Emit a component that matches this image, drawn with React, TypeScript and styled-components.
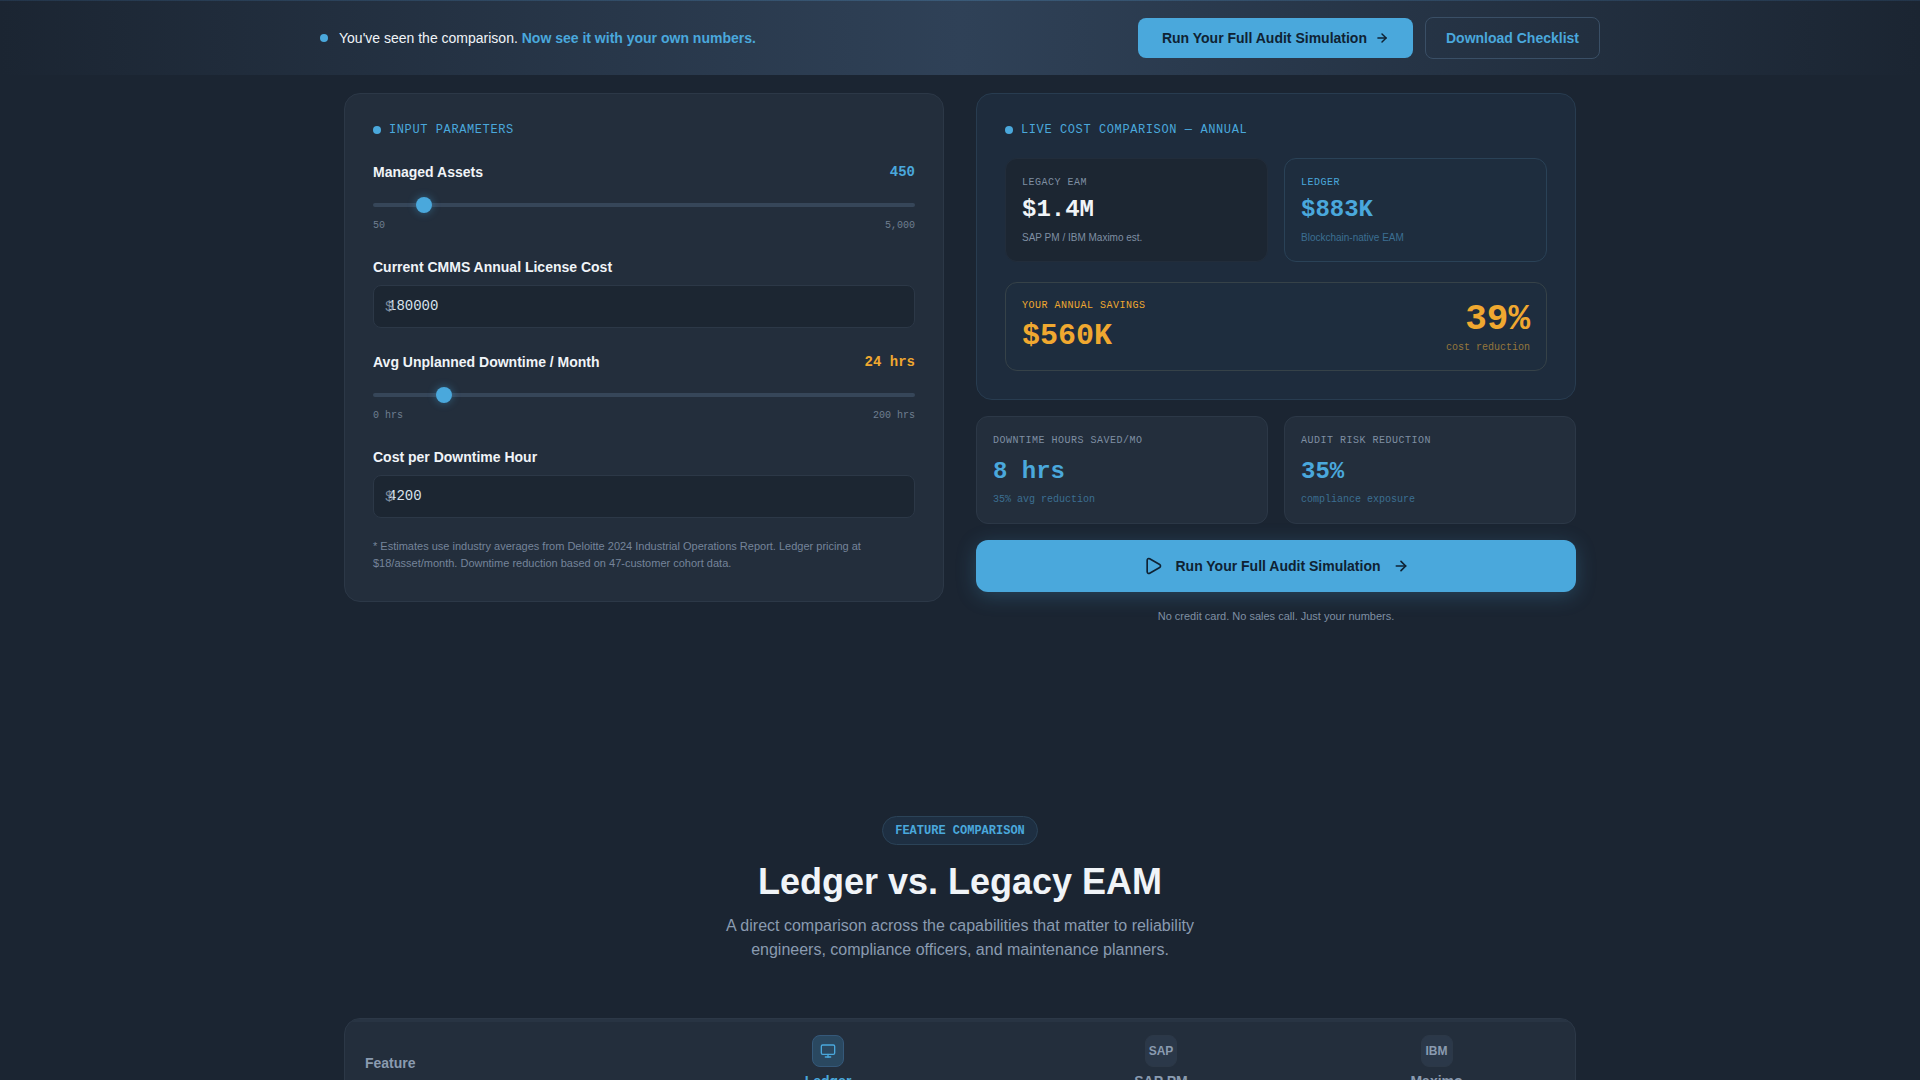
import { useState } from "react";
import styled, { createGlobalStyle } from "styled-components";
import { ArrowRight, Monitor, Play } from "lucide-react";

const GlobalStyle = createGlobalStyle`
  html, body {
    margin: 0;
    padding: 0;
    height: 1080px;
    overflow: hidden;
    background: #1b2532;
  }
  * {
    box-sizing: border-box;
  }
`;

const blue = "#4aa8dc";
const amber = "#f0a830";
const sans = `"Liberation Sans", Arial, sans-serif`;
const mono = `"Liberation Mono", "Courier New", monospace`;

const Page = styled.div`
  height: 1080px;
  overflow: hidden;
  background: #1b2532;
  font-family: ${sans};
  color: #f0f4f8;
`;

const TopBar = styled.div`
  height: 75px;
  border-top: 1px solid;
  border-image: linear-gradient(90deg, #23354a, #3a5a78 50%, #23354a) 1;
  background: linear-gradient(90deg, #1b2532 0%, #2f4157 50%, #1b2532 100%);
`;

const TopBarInner = styled.div`
  max-width: 1280px;
  height: 74px;
  margin: 0 auto;
  display: flex;
  align-items: center;
  justify-content: space-between;
`;

const TopMessage = styled.div`
  display: flex;
  align-items: center;
  gap: 11px;
  font-size: 14px;
  color: #f0f4f8;
  strong {
    color: ${blue};
    font-weight: 700;
  }
`;

const TopDot = styled.span`
  width: 8px;
  height: 8px;
  border-radius: 50%;
  background: ${blue};
`;

const TopActions = styled.div`
  display: flex;
  align-items: center;
  gap: 12px;
`;

const PrimaryButton = styled.button`
  height: 40px;
  padding: 0 24px;
  display: flex;
  align-items: center;
  gap: 8px;
  border: none;
  border-radius: 8px;
  background: ${blue};
  color: #0f2233;
  font-family: ${sans};
  font-size: 14px;
  font-weight: 700;
  cursor: pointer;
`;

const GhostButton = styled.button`
  height: 42px;
  padding: 0 20px;
  border: 1px solid #3a4f66;
  border-radius: 8px;
  background: transparent;
  color: ${blue};
  font-family: ${sans};
  font-size: 14px;
  font-weight: 700;
  cursor: pointer;
`;

const Container = styled.div`
  width: 1232px;
  margin: 0 auto;
`;

const Columns = styled.div`
  display: grid;
  grid-template-columns: 600px 600px;
  gap: 32px;
  align-items: start;
  margin-top: 18px;
  height: 531px;
`;

const Panel = styled.div<{ $live?: boolean }>`
  padding: 28px;
  border-radius: 16px;
  border: 1px solid ${(p) => (p.$live ? "#283c50" : "#2c3847")};
  background: ${(p) => (p.$live ? "#1e2c3d" : "#232e3c")};
`;

const PanelTitle = styled.div`
  display: flex;
  align-items: center;
  gap: 8px;
  height: 15px;
  font-family: ${mono};
  font-size: 12px;
  letter-spacing: 0.6px;
  color: ${blue};
  &::before {
    content: "";
    width: 8px;
    height: 8px;
    border-radius: 50%;
    background: ${blue};
  }
`;

const Fields = styled.div`
  display: flex;
  flex-direction: column;
  gap: 24px;
  margin-top: 25px;
`;

const Field = styled.div``;

const FieldHead = styled.div`
  display: flex;
  align-items: center;
  justify-content: space-between;
  height: 20px;
`;

const FieldLabel = styled.label`
  font-size: 14px;
  font-weight: 700;
  color: #f0f4f8;
`;

const FieldValue = styled.span<{ $amber?: boolean }>`
  font-family: ${mono};
  font-size: 14px;
  font-weight: 700;
  color: ${(p) => (p.$amber ? amber : blue)};
`;

const Range = styled.input`
  display: block;
  width: 100%;
  height: 16px;
  margin: 15px 0 0;
  appearance: none;
  background: transparent;
  &::-webkit-slider-runnable-track {
    height: 4px;
    border-radius: 2px;
    background: #364659;
  }
  &::-webkit-slider-thumb {
    appearance: none;
    width: 16px;
    height: 16px;
    margin-top: -6px;
    border-radius: 50%;
    background: ${blue};
    box-shadow: 0 0 8px rgba(74, 168, 220, 0.45);
  }
`;

const RangeEnds = styled.div`
  display: flex;
  justify-content: space-between;
  margin-top: 6px;
  height: 14px;
  line-height: 14px;
  font-family: ${mono};
  font-size: 10px;
  color: #6f7e90;
`;

const MoneyBox = styled.div`
  position: relative;
  margin-top: 8px;
`;

const MoneySign = styled.span`
  position: absolute;
  left: 12px;
  top: 50%;
  transform: translateY(-50%);
  font-family: ${mono};
  font-size: 14px;
  color: #7b8a9c;
`;

const MoneyInput = styled.input`
  display: block;
  width: 100%;
  height: 43px;
  padding: 0 14px 1px;
  border: 1px solid #2c3847;
  border-radius: 8px;
  background: #1c2632;
  color: #d8e2ec;
  font-family: ${mono};
  font-size: 14px;
  outline: none;
`;

const Footnote = styled.p`
  margin: 20px 0 1px;
  font-size: 11px;
  line-height: 17px;
  color: #75849a;
`;

const RightColumn = styled.div`
  display: flex;
  flex-direction: column;
  gap: 16px;
`;

const TwoUp = styled.div<{ $first?: boolean }>`
  display: grid;
  grid-template-columns: 1fr 1fr;
  gap: 16px;
  margin-top: ${(p) => (p.$first ? "21px" : "0")};
`;

const CostCard = styled.div<{ $ledger?: boolean }>`
  height: 104px;
  padding: 17px 16px 16px;
  border-radius: 12px;
  border: 1px solid ${(p) => (p.$ledger ? "#2a4257" : "#222d3b")};
  background: ${(p) => (p.$ledger ? "#1e2d3e" : "#1c2632")};
`;

const SmallCaps = styled.div<{ $color: string }>`
  height: 14px;
  line-height: 14px;
  font-family: ${mono};
  font-size: 10px;
  letter-spacing: 0.5px;
  color: ${(p) => p.$color};
`;

const CostValue = styled.div<{ $color: string }>`
  margin-top: 6px;
  height: 28px;
  line-height: 28px;
  font-family: ${mono};
  font-size: 24px;
  font-weight: 700;
  color: ${(p) => p.$color};
`;

const CostNote = styled.div<{ $color: string }>`
  margin-top: 7px;
  font-size: 10px;
  line-height: 13px;
  color: ${(p) => p.$color};
`;

const SavingsBox = styled.div`
  display: flex;
  align-items: center;
  justify-content: space-between;
  height: 89px;
  margin-top: 20px;
  padding: 0 16px;
  border-radius: 12px;
  border: 1px solid #364248;
  background: #1e2d3e;
`;

const SavingsLeft = styled.div`
  margin-top: -1px;
`;

const SavingsValue = styled.div`
  margin-top: 5px;
  line-height: 36px;
  font-family: ${mono};
  font-size: 30px;
  font-weight: 700;
  color: ${amber};
`;

const SavingsRight = styled.div`
  text-align: right;
`;

const SavingsPct = styled.div`
  line-height: 40px;
  font-family: ${mono};
  font-size: 36px;
  font-weight: 700;
  color: ${amber};
`;

const SavingsNote = styled.div`
  margin-top: 1px;
  line-height: 13px;
  font-family: ${mono};
  font-size: 10px;
  color: #96773c;
`;

const StatCard = styled.div`
  height: 108px;
  padding: 17px 16px 16px;
  border-radius: 12px;
  border: 1px solid #2c3847;
  background: #232e3c;
`;

const StatValue = styled(CostValue)`
  margin-top: 10px;
`;

const StatNote = styled.div`
  margin-top: 7px;
  line-height: 13px;
  font-family: ${mono};
  font-size: 10px;
  color: #3c6f92;
`;

const RunButton = styled.button`
  display: flex;
  align-items: center;
  justify-content: center;
  gap: 12px;
  width: 100%;
  height: 52px;
  border: none;
  border-radius: 12px;
  background: ${blue};
  color: #0f2233;
  font-family: ${sans};
  font-size: 14px;
  font-weight: 700;
  box-shadow: 0 4px 20px rgba(74, 168, 220, 0.25);
  cursor: pointer;
`;

const RunNote = styled.div`
  margin-top: 2px;
  text-align: center;
  font-size: 11px;
  line-height: 13px;
  color: #7f8fa3;
`;

const SectionHead = styled.div`
  display: flex;
  flex-direction: column;
  align-items: center;
  margin-top: 192px;
`;

const Pill = styled.div`
  height: 29px;
  padding: 0 12px;
  display: flex;
  align-items: center;
  border-radius: 15px;
  border: 1px solid #2b4358;
  background: #1e2f42;
  font-family: ${mono};
  font-size: 12px;
  font-weight: 700;
  color: ${blue};
`;

const Heading = styled.h2`
  margin: 15px 0 0;
  font-size: 36px;
  font-weight: 700;
  line-height: 44px;
  color: #f0f4f8;
`;

const SubHeading = styled.p`
  margin: 10px 0 0;
  width: 520px;
  text-align: center;
  font-size: 16px;
  line-height: 24px;
  color: #8a9bb0;
`;

const TableCard = styled.div`
  margin-top: 56px;
  height: 200px;
  border-radius: 16px;
  border: 1px solid #2c3847;
  background: #232e3c;
  overflow: hidden;
`;

const TableHead = styled.div`
  display: grid;
  grid-template-columns: 287px 392px 274px 277px;
  padding-top: 13px;
  border-top: 3px solid #283443;
`;

const FeatureCell = styled.div`
  padding: 20px 0 0 20px;
  font-size: 14px;
  font-weight: 700;
  color: #8a9bb0;
`;

const VendorCell = styled.div`
  display: flex;
  flex-direction: column;
  align-items: center;
  gap: 6px;
`;

const VendorIcon = styled.div<{ $ledger?: boolean }>`
  width: 32px;
  height: 32px;
  display: flex;
  align-items: center;
  justify-content: center;
  border-radius: 8px;
  border: 1px solid ${(p) => (p.$ledger ? "#35597a" : "#2c3847")};
  background: ${(p) => (p.$ledger ? "#2a4860" : "#2b3849")};
  color: ${(p) => (p.$ledger ? blue : "#8a9bb0")};
  font-size: 12px;
  font-weight: 700;
`;

const VendorName = styled.div<{ $ledger?: boolean }>`
  font-size: 14px;
  font-weight: 700;
  color: ${(p) => (p.$ledger ? blue : "#8a9bb0")};
`;

const App = () => {
  const [assets, setAssets] = useState(450);
  const [license, setLicense] = useState("180000");
  const [downtime, setDowntime] = useState(24);
  const [hourCost, setHourCost] = useState("4200");

  return (
    <Page>
      <GlobalStyle />
      <TopBar>
        <TopBarInner>
          <TopMessage>
            <TopDot />
            <span>
              You've seen the comparison. <strong>Now see it with your own numbers.</strong>
            </span>
          </TopMessage>
          <TopActions>
            <PrimaryButton>
              Run Your Full Audit Simulation
              <ArrowRight size={14} strokeWidth={2.5} />
            </PrimaryButton>
            <GhostButton>Download Checklist</GhostButton>
          </TopActions>
        </TopBarInner>
      </TopBar>

      <Container>
        <Columns>
          <Panel>
            <PanelTitle>INPUT PARAMETERS</PanelTitle>
            <Fields>
              <Field>
                <FieldHead>
                  <FieldLabel>Managed Assets</FieldLabel>
                  <FieldValue>{assets}</FieldValue>
                </FieldHead>
                <Range
                  type="range"
                  min={50}
                  max={5000}
                  value={assets}
                  onChange={(e) => setAssets(Number(e.target.value))}
                />
                <RangeEnds>
                  <span>50</span>
                  <span>5,000</span>
                </RangeEnds>
              </Field>
              <Field>
                <FieldHead>
                  <FieldLabel>Current CMMS Annual License Cost</FieldLabel>
                </FieldHead>
                <MoneyBox>
                  <MoneySign>$</MoneySign>
                  <MoneyInput value={license} onChange={(e) => setLicense(e.target.value)} />
                </MoneyBox>
              </Field>
              <Field>
                <FieldHead>
                  <FieldLabel>Avg Unplanned Downtime / Month</FieldLabel>
                  <FieldValue $amber>{downtime} hrs</FieldValue>
                </FieldHead>
                <Range
                  type="range"
                  min={0}
                  max={200}
                  value={downtime}
                  onChange={(e) => setDowntime(Number(e.target.value))}
                />
                <RangeEnds>
                  <span>0 hrs</span>
                  <span>200 hrs</span>
                </RangeEnds>
              </Field>
              <Field>
                <FieldHead>
                  <FieldLabel>Cost per Downtime Hour</FieldLabel>
                </FieldHead>
                <MoneyBox>
                  <MoneySign>$</MoneySign>
                  <MoneyInput value={hourCost} onChange={(e) => setHourCost(e.target.value)} />
                </MoneyBox>
              </Field>
            </Fields>
            <Footnote>
              * Estimates use industry averages from Deloitte 2024 Industrial Operations Report. Ledger pricing at
              $18/asset/month. Downtime reduction based on 47-customer cohort data.
            </Footnote>
          </Panel>

          <RightColumn>
            <Panel $live>
              <PanelTitle>LIVE COST COMPARISON — ANNUAL</PanelTitle>
              <TwoUp $first>
                <CostCard>
                  <SmallCaps $color="#7f8fa3">LEGACY EAM</SmallCaps>
                  <CostValue $color="#f0f4f8">$1.4M</CostValue>
                  <CostNote $color="#7f8fa3">SAP PM / IBM Maximo est.</CostNote>
                </CostCard>
                <CostCard $ledger>
                  <SmallCaps $color={blue}>LEDGER</SmallCaps>
                  <CostValue $color={blue}>$883K</CostValue>
                  <CostNote $color="#3c6f92">Blockchain-native EAM</CostNote>
                </CostCard>
              </TwoUp>
              <SavingsBox>
                <SavingsLeft>
                  <SmallCaps $color={amber}>YOUR ANNUAL SAVINGS</SmallCaps>
                  <SavingsValue>$560K</SavingsValue>
                </SavingsLeft>
                <SavingsRight>
                  <SavingsPct>39%</SavingsPct>
                  <SavingsNote>cost reduction</SavingsNote>
                </SavingsRight>
              </SavingsBox>
            </Panel>

            <TwoUp>
              <StatCard>
                <SmallCaps $color="#7f8fa3">DOWNTIME HOURS SAVED/MO</SmallCaps>
                <StatValue $color={blue}>8 hrs</StatValue>
                <StatNote>35% avg reduction</StatNote>
              </StatCard>
              <StatCard>
                <SmallCaps $color="#7f8fa3">AUDIT RISK REDUCTION</SmallCaps>
                <StatValue $color={blue}>35%</StatValue>
                <StatNote>compliance exposure</StatNote>
              </StatCard>
            </TwoUp>

            <RunButton>
              <Play size={20} strokeWidth={2} />
              Run Your Full Audit Simulation
              <ArrowRight size={16} strokeWidth={2.5} />
            </RunButton>
            <RunNote>No credit card. No sales call. Just your numbers.</RunNote>
          </RightColumn>
        </Columns>

        <SectionHead>
          <Pill>FEATURE COMPARISON</Pill>
          <Heading>Ledger vs. Legacy EAM</Heading>
          <SubHeading>
            A direct comparison across the capabilities that matter to reliability engineers, compliance officers, and
            maintenance planners.
          </SubHeading>
        </SectionHead>

        <TableCard>
          <TableHead>
            <FeatureCell>Feature</FeatureCell>
            <VendorCell>
              <VendorIcon $ledger>
                <Monitor size={16} strokeWidth={2} />
              </VendorIcon>
              <VendorName $ledger>Ledger</VendorName>
            </VendorCell>
            <VendorCell>
              <VendorIcon>SAP</VendorIcon>
              <VendorName>SAP PM</VendorName>
            </VendorCell>
            <VendorCell>
              <VendorIcon>IBM</VendorIcon>
              <VendorName>Maximo</VendorName>
            </VendorCell>
          </TableHead>
        </TableCard>
      </Container>
    </Page>
  );
};

export default App;
